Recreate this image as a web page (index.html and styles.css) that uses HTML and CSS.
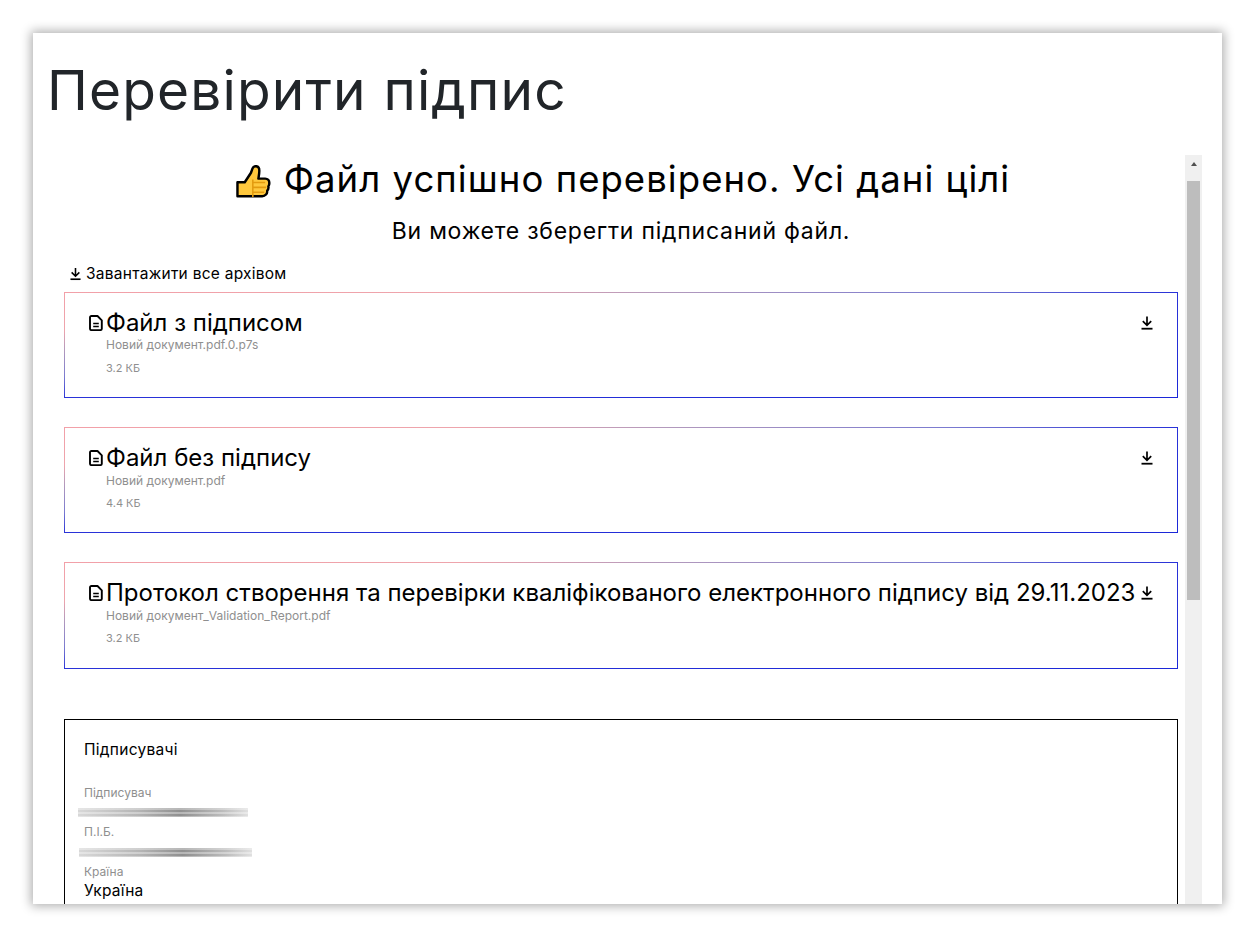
FILE: index.html
```html
<!DOCTYPE html>
<html lang="uk">
<head>
<meta charset="utf-8">
<title>Перевірити підпис</title>
<link rel="stylesheet" href="styles.css">
</head>
<body>
<svg class="defs" width="0" height="0" aria-hidden="true">
  <symbol id="dl" viewBox="0 0 12 14">
    <path d="M6 .5v8.600M1.800 5.200 6 9.400l4.200-4.200" fill="none" stroke="#000" stroke-width="1.700"/>
    <path d="M.5 12.700h11" fill="none" stroke="#000" stroke-width="1.800"/>
  </symbol>
  <symbol id="doc" viewBox="0 0 14 16">
    <path d="M2.400 1h6.100l4.300 4.300v8.400c0 .8-.6 1.400-1.400 1.400H2.400c-.8 0-1.400-.6-1.400-1.400V2.400C1 1.600 1.600 1 2.400 1z" fill="none" stroke="#000" stroke-width="1.900" stroke-linejoin="round"/>
    <path d="M4.200 8.500h5.600M4.200 11.400h5.600" fill="none" stroke="#000" stroke-width="1.500"/>
  </symbol>
</svg>
<main class="window">
  <h1 class="page-title">Перевірити підпис</h1>
  <div class="viewport">
    <div class="content">
      <h2 class="result-title">
        <svg class="thumb" viewBox="0 0 36 36" aria-hidden="true">
          <path d="M1.500 17.700H9L15.400 8 17 3.500C17.600 1.800 19 1.200 20.300 1.200c2.200 0 3.700 1.900 3.700 4.600 0 3-.6 5.700-1 8.200h7c2.700 0 4.300 2 4.300 4.400 0 1.500-.4 2.700-1 3.600.4 1.800-.2 3.400-1.200 4.400.2 1.800-.4 3.400-1.500 4.100-.8 1.100-2 1.700-3.600 1.700H1.500z" fill="#ffc83d" stroke="#000" stroke-width="2.500" stroke-linejoin="round"/>
          <path d="M17.300 15v18M18 18h12M18 23h13M18 28h11" fill="none" stroke="#e39b10" stroke-width="1.600"/>
        </svg>
        <span>Файл успішно перевірено. Усі дані цілі</span>
      </h2>
      <p class="result-note">Ви можете зберегти підписаний файл.</p>
      <a class="archive-link"><svg class="dl-archive"><use href="#dl"/></svg>Завантажити все архівом</a>

      <section class="file-card">
        <div class="file-head">
          <svg class="doc-icon"><use href="#doc"/></svg>
          <span class="file-title">Файл з підписом</span>
          <svg class="dl-icon"><use href="#dl"/></svg>
        </div>
        <div class="file-name">Новий документ.pdf.0.p7s</div>
        <div class="file-size">3.2 КБ</div>
      </section>

      <section class="file-card">
        <div class="file-head">
          <svg class="doc-icon"><use href="#doc"/></svg>
          <span class="file-title">Файл без підпису</span>
          <svg class="dl-icon"><use href="#dl"/></svg>
        </div>
        <div class="file-name">Новий документ.pdf</div>
        <div class="file-size">4.4 КБ</div>
      </section>

      <section class="file-card">
        <div class="file-head">
          <svg class="doc-icon"><use href="#doc"/></svg>
          <span class="file-title">Протокол створення та перевірки кваліфікованого електронного підпису від 29.11.2023</span>
          <svg class="dl-icon"><use href="#dl"/></svg>
        </div>
        <div class="file-name">Новий документ_Validation_Report.pdf</div>
        <div class="file-size">3.2 КБ</div>
      </section>

      <section class="signers">
        <div class="signers-title">Підписувачі</div>
        <div class="field-label first">Підписувач</div>
        <div class="redacted wide-a"></div>
        <div class="field-label">П.І.Б.</div>
        <div class="redacted wide-b"></div>
        <div class="field-label">Країна</div>
        <div class="field-value">Україна</div>
      </section>
    </div>
    <aside class="scrollbar" aria-hidden="true">
      <div class="scroll-btn"><span class="scroll-arrow"></span></div>
      <div class="scroll-thumb"></div>
    </aside>
  </div>
</main>
</body>
</html>
```
FILE: styles.css
```css
* { box-sizing: border-box; }
html, body { height: 100%; }
body {
  margin: 0;
  padding: 33px;
  background: #fff;
  font-family: "Inter", "Noto Sans", sans-serif;
  color: #000;
  overflow: hidden;
}
.defs { position: absolute; }
.window {
  width: 1189px;
  height: 871px;
  background: #fff;
  box-shadow: 0 0 10px 2px rgba(0, 0, 0, .32);
  display: flex;
  flex-direction: column;
  overflow: hidden;
  padding-left: 15px;
}
.page-title {
  margin: 0 0 0 -1px;
  height: 122px;
  padding-top: 24px;
  font-size: 55px;
  line-height: 66px;
  font-weight: 400;
  color: #212529;
  letter-spacing: 1.150px;
  white-space: nowrap;
}
.viewport {
  display: flex;
  flex: 1;
  min-height: 0;
  overflow: hidden;
  width: 1154px;
}
.content { flex: 1; min-width: 0; padding: 0 7px 0 16px; }
.result-title {
  margin: 0;
  height: 50px;
  padding: 0 0 2px 4px;
  display: flex;
  align-items: center;
  justify-content: center;
  gap: 13px;
  font-size: 36.500px;
  line-height: 46px;
  font-weight: 400;
  letter-spacing: 1.050px;
  white-space: nowrap;
}
.thumb { width: 35px; height: 35px; flex: none; margin-top: 7px; }
.result-note {
  margin: 0;
  height: 37px;
  padding-top: 13px;
  text-align: center;
  font-size: 23px;
  line-height: 26px;
  letter-spacing: .76px;
}
.archive-link {
  display: flex;
  align-items: center;
  height: 49.600px;
  padding: 15px 0 0 6px;
  font-size: 15.500px;
  line-height: 20px;
  letter-spacing: .26px;
}
.dl-archive { width: 11px; height: 14px; margin-right: 5px; }
.file-card {
  height: 106.600px;
  margin-bottom: 28.600px;
  padding: 17px 24px 0;
  border: 1px solid;
  border-image: linear-gradient(to bottom right, #f2a0a8 0%, #eea4ac 18%, #b49abc 27%, #7a7ad0 40%, #2a33d8 50%, #1c28d8 100%) 1;
}
.file-head { display: flex; align-items: center; height: 26px; }
.doc-icon { width: 14px; height: 16px; flex: none; margin-right: 3px; }
.file-title { flex: 1; min-width: 0; font-size: 24px; line-height: 26px; letter-spacing: .01px; white-space: nowrap; }
.dl-icon { width: 12px; height: 14px; flex: none; margin-left: 6px; }
.file-name {
  margin: 1.800px 0 0 17px;
  font-size: 12px;
  line-height: 16px;
  color: #8f8f8f;
}
.file-size {
  margin: 6.200px 0 0 17px;
  font-size: 11px;
  line-height: 16px;
  color: #8f8f8f;
}
.signers {
  margin-top: 50.400px;
  height: 400px;
  border: 1px solid #000;
  padding: 20px 19px 0;
}
.signers-title { font-size: 15.500px; line-height: 20px; letter-spacing: .28px; }
.field-label { font-size: 12px; line-height: 16px; color: #8f8f8f; margin-top: 7px; }
.field-label.first { margin-top: 25px; }
.field-value { font-size: 15.500px; line-height: 22px; letter-spacing: .2px; }
.redacted {
  height: 9px;
  margin-top: 7px;
  background:
    repeating-linear-gradient(to bottom, rgba(255,255,255,.35) 0 2px, rgba(255,255,255,0) 2px 4px),
    linear-gradient(to right, #d8d8d8, #b5b5b5 35%, #8f8f8f 60%, #bcbcbc 85%, #e0e0e0);
}
.wide-a { width: 170px; margin-left: -6px; }
.wide-b { width: 173px; margin-left: -5px; margin-top: 8px; }
.scrollbar { width: 17px; flex: none; background: #f0f0f0; display: flex; flex-direction: column; align-items: center; }
.scroll-btn { height: 26px; width: 100%; display: flex; justify-content: center; padding-top: 7px; }
.scroll-arrow {
  width: 0; height: 0;
  border-left: 3.500px solid transparent;
  border-right: 3.500px solid transparent;
  border-bottom: 4px solid #505050;
}
.scroll-thumb { width: 13px; height: 419px; background: #bdbdbd; }
```
